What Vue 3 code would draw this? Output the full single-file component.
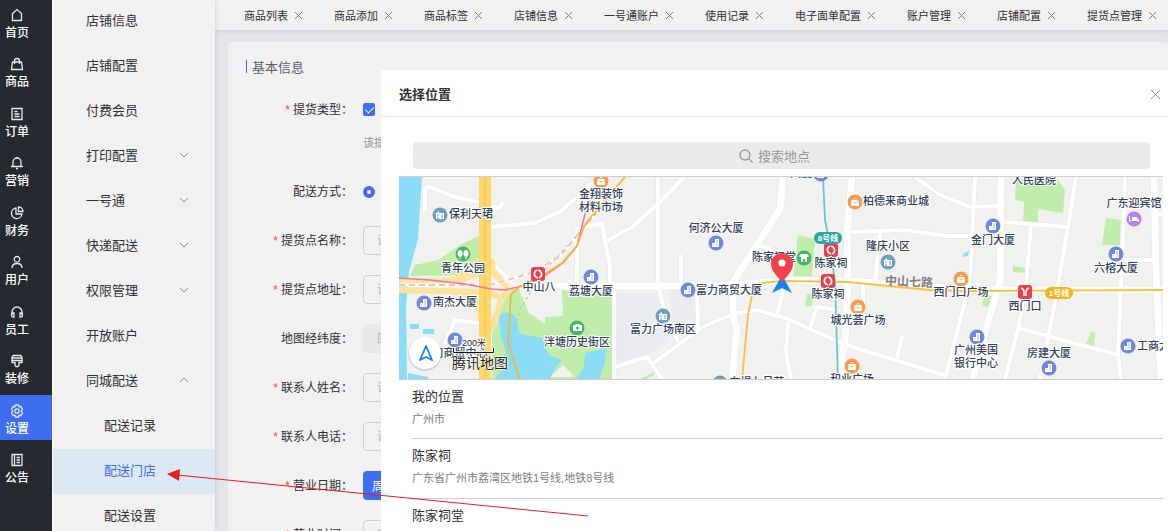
<script setup>
import { ref } from 'vue'

const mainNav = [
  { label: '首页', icon: ['M2.5 5.5 7 1.5l4.5 4v7h-9z'] },
  { label: '商品', icon: ['M2.5 5h9l1 7.5h-11z', 'M4.5 7V4a2.5 2.5 0 0 1 5 0v3'] },
  { label: '订单', icon: ['M2 1.5h10v11H2z', 'M4.5 4.5h3M4.5 7h5M4.5 9.5h5'] },
  { label: '营销', icon: ['M3 10.5V6a4 4 0 0 1 8 0v4.5', 'M1 10.5h12M6 12.5h2M7 1v1'] },
  { label: '财务', icon: ['M6 2a5.3 5.3 0 1 0 6 6H6z', 'M8.5 1v4.5H13A4.5 4.5 0 0 0 8.5 1z'] },
  { label: '用户', icon: ['M7 1.5a2.8 2.8 0 1 0 .01 0z', 'M2 13c0-3 2-4.5 5-4.5s5 1.5 5 4.5'] },
  { label: '员工', icon: ['M2 10V7a5 5 0 0 1 10 0v3', 'M2 8h2v4H3a1.5 1.5 0 0 1-1.5-1.5zM12 8h-2v4h1a1.5 1.5 0 0 0 1.5-1.5z'] },
  { label: '装修', icon: ['M3.5 1.5h7l1.5 1.5v3.5H2V3z', 'M2 4h10M2 6.5v2h3v3l1 1h2l1-1v-3h3v-2'] },
  { label: '设置', icon: ['M5.5 1h3l.6 1.7 1.8-.2 1.5 2.5L11.3 7l1.1 2-1.5 2.5-1.8-.2-.6 1.7h-3l-.6-1.7-1.8.2L1.600 9l1.100-2-1.100-2 1.500-2.500 1.800.2z', 'M7 4.8a2.2 2.2 0 1 0 .01 0z'] },
  { label: '公告', icon: ['M2 1.5h10v11H2zM4.5 1.5v11', 'M6.5 4.5H10M6.5 7H10M6.5 9.5H10'] },
]
const activeNav = ref('设置')

const subNav = [
  { label: '店铺信息' },
  { label: '店铺配置' },
  { label: '付费会员' },
  { label: '打印配置', arrow: 'down' },
  { label: '一号通', arrow: 'down' },
  { label: '快递配送', arrow: 'down' },
  { label: '权限管理', arrow: 'down' },
  { label: '开放账户' },
  { label: '同城配送', arrow: 'up' },
  { label: '配送记录', child: true },
  { label: '配送门店', child: true },
  { label: '配送设置', child: true },
]
const activeSub = ref('配送门店')

const tabs = ['商品列表', '商品添加', '商品标签', '店铺信息', '一号通账户', '使用记录', '电子面单配置', '账户管理', '店铺配置', '提货点管理']

const fields = [
  { id: 'name', label: '提货点名称', required: true },
  { id: 'address', label: '提货点地址', required: true },
  { id: 'geo', label: '地图经纬度', disabled: true },
  { id: 'contact', label: '联系人姓名', required: true },
  { id: 'phone', label: '联系人电话', required: true },
]

const places = [
  { name: '我的位置', address: '广州市' },
  { name: '陈家祠', address: '广东省广州市荔湾区地铁1号线,地铁8号线' },
  { name: '陈家祠堂', address: '广东省广州市荔湾区中山七路恩龙里34号' },
]

const roads = [
  'M425 210V190q0-3 5-3l25 10 24 5', 'M491 207l9 1 3-6',
  'M491 227l44-4 25-11 40-35', 'M493 264l22 21 15 2',
  'M577 284V229l25-6 3 19 5 23v20', 'M605 242l27-15 26-23 26-27',
  'M658 177v108l5 20 15 37', 'M681 255v30', 'M697 290l1 39', 'M614 286v93',
  'M615 367l32-10 5 7 51-37 30-13 24-4 31 9 55 25 104 32', 'M652 364l10 15',
  'M757 245l30 9 11 2', 'M783 290l-6 27', 'M788 322l-2 30 5 27',
  'M848 232l57-2 42 6h23', 'M880 232l-5 50',
  'M915 177l25 18 30 12 30-1', 'M975 177l-5 105-15 58-10 39',
  'M810 328l7-21 20 3', 'M897 358l5-22', 'M863 285v23',
  'M1005 222l63 5', 'M1031 225l-5 60-8 44-13 50', 'M1076 177l-8 50-13 75-15 77',
  'M1018 328l100 27', 'M1125 177l-4 108-3 70 3 24', 'M1119 260h38',
  'M444 345l11-25 22 3 6-1', 'M1163 214h-6',
]
const wideRoads = [
  'M520 286h194l30-2 40-4 64 1 60 4 70 5h185',
  'M783 177l-3 32-23 36-24 37v33l4 14-5 50',
  'M852 177l-5 55 1 50-3 58-6 39',
  'M1001 177l-1 105-12 40-15 57',
  'M1154 177l2 95 5 107',
]

const greens = [
  'M415 265l23-5 24-16 21-10v41l-73 1z',
  'M492 318l20-29h43l20 3h38v87h-121z',
  'M798 235l17 4-3 39h-19z', 'M807 294h6l-1 12h-7z',
  'M1016 179l42 1 7 10-2 23-25-4v13h-15l1-20-9-2z',
  'M1106 218l15 2-1 25h-18z', 'M1013 266l13 2-1 5-12-1z',
  'M985 295l7 1-4 11-6-2z', 'M1091 332h4l-1 15h-9z', 'M640 379l14-7v3l-8 4z',
]
const waters = [
  'M399 177h23l-4 62-9 33-3 33 1 74h-8z',
  'M498 315q12-6 18 2l4 17 22 4 7 17 13 5q-8 8-12 19h-55l14-18-8-24z',
  'M576 379l8-12 1-14 22-5-3 18-5 13z',
  'M410 324h9v5h-9zM423 329h11v5h-11zM408 373l20 4v2h-20z',
  'M963 254l6-3-1 5-5 1z',
]

// kinds: office, home, shop, park, hotel
const pois = [
  { x: 440, y: 215, kind: 'home' }, { x: 463, y: 254, kind: 'park' },
  { x: 424, y: 303, kind: 'office' }, { x: 591, y: 277, kind: 'office' },
  { x: 601, y: 181, kind: 'shop' }, { x: 455, y: 340, kind: 'office' },
  { x: 577, y: 328, kind: 'park' }, { x: 716, y: 243, kind: 'office' },
  { x: 688, y: 290, kind: 'office' }, { x: 663, y: 316, kind: 'home' },
  { x: 804, y: 258, kind: 'park' }, { x: 855, y: 202, kind: 'shop' },
  { x: 888, y: 262, kind: 'home' }, { x: 961, y: 279, kind: 'shop' },
  { x: 858, y: 307, kind: 'shop' }, { x: 852, y: 366, kind: 'shop' },
  { x: 821, y: 174, kind: 'office' }, { x: 720, y: 383, kind: 'home' },
  { x: 993, y: 226, kind: 'office' }, { x: 1134, y: 219, kind: 'hotel' },
  { x: 1116, y: 254, kind: 'office' }, { x: 977, y: 337, kind: 'office' },
  { x: 1049, y: 368, kind: 'office' }, { x: 1128, y: 346, kind: 'office' },
]
const stations = [{ x: 538, y: 274 }, { x: 831, y: 250 }, { x: 828, y: 281 }]

const mapLabels = [
  ['保利天珺', 471, 214], ['青年公园', 463, 268], ['南杰大厦', 455, 302], ['中山八', 539, 287],
  ['荔塘大厦', 591, 291], ['金翔装饰', 601, 194], ['材料市场', 601, 207], ['司商贸中心', 460, 353],
  ['泮塘历史街区', 577, 342], ['何济公大厦', 716, 228], ['富力商贸大厦', 729, 290],
  ['富力广场南区', 663, 329], ['陈家祠堂', 774, 257], ['陈家祠', 831, 263], ['陈家祠', 828, 294],
  ['柏德来商业城', 896, 201], ['隆庆小区', 888, 246], ['西门口广场', 961, 292],
  ['城光荟广场', 858, 320], ['和业广场', 852, 379], ['大厦', 801, 173], ['东堤七号苑', 757, 382],
  ['人民医院', 1034, 180], ['金门大厦', 993, 240], ['广东迎宾馆', 1134, 203], ['六榕大厦', 1116, 268],
  ['西门口', 1025, 306], ['广州美国', 976, 350], ['银行中心', 976, 363], ['房建大厦', 1049, 353],
  ['工商大厦', 1159, 346],
]
</script>

<template>
  <div class="shell">
    <nav class="main-nav">
      <a v-for="item in mainNav" :key="item.label" href="#" :class="{ active: item.label === activeNav }" @click.prevent="activeNav = item.label">
        <svg width="14" height="14" viewBox="0 0 14 14" fill="none" stroke="currentColor" stroke-width="1.3">
          <path v-for="d in item.icon" :key="d" :d="d" />
        </svg>
        <span>{{ item.label }}</span>
      </a>
    </nav>

    <nav class="sub-nav">
      <a v-for="item in subNav" :key="item.label" href="#" :class="{ child: item.child, active: item.label === activeSub }" @click.prevent="activeSub = item.label">
        <span>{{ item.label }}</span>
        <svg v-if="item.arrow" :class="item.arrow" width="10" height="6" viewBox="0 0 10 6" fill="none" stroke="#8a8d92">
          <path d="M1 1l4 4 4-4" />
        </svg>
      </a>
    </nav>

    <div class="workspace">
      <div class="tabs">
        <div v-for="tab in tabs" :key="tab" class="tab">
          <a href="#">{{ tab }}</a>
          <button type="button" :aria-label="'关闭' + tab">
            <svg width="9" height="9" viewBox="0 0 9 9" stroke="#7d7f83" fill="none"><path d="M1 1l7 7M8 1l-7 7" /></svg>
          </button>
        </div>
      </div>

      <form class="card" @submit.prevent>
        <h2>基本信息</h2>
        <div class="row">
          <label class="required" for="type">提货类型：</label>
          <input id="type" class="check" type="checkbox" checked />
        </div>
        <p class="hint">该提货点支持的提货类型</p>
        <div class="row">
          <label for="way">配送方式：</label>
          <input id="way" class="radio" type="radio" checked />
        </div>
        <div v-for="f in fields" :key="f.id" class="row">
          <label :class="{ required: f.required }" :for="f.id">{{ f.label }}：</label>
          <input :id="f.id" class="text" type="text" :disabled="f.disabled" :placeholder="f.disabled ? '回填经纬度' : '请输入' + f.label" />
        </div>
        <div class="row">
          <span class="label required">营业日期：</span>
          <button class="day" type="button">周一</button>
        </div>
        <div class="row">
          <label class="required" for="time">营业时间：</label>
          <div class="time">
            <svg width="12" height="12" viewBox="0 0 12 12" fill="none" stroke="#b0b3b9"><circle cx="6" cy="6" r="5" /><path d="M6 3v3h3" /></svg>
            <input id="time" type="text" placeholder="开始时间" />
          </div>
        </div>
      </form>
    </div>

    <section class="dialog" role="dialog" aria-labelledby="dialog-title">
      <header>
        <h1 id="dialog-title">选择位置</h1>
        <button type="button" aria-label="关闭">
          <svg width="11" height="11" viewBox="0 0 11 11" stroke="#909399" fill="none"><path d="M1 1l9 9M10 1l-9 9" /></svg>
        </button>
      </header>
      <div class="picker">
        <button class="search" type="button">
          <svg width="14" height="14" viewBox="0 0 14 14" fill="none" stroke="#999" stroke-width="1.3"><circle cx="6" cy="6" r="5" /><path d="M10 10l3.5 3.5" /></svg>
          <span>搜索地点</span>
        </button>

        <svg class="map" viewBox="399 177 764 202" preserveAspectRatio="xMidYMid slice">
          <defs>
            <g id="poi-office"><circle r="7.5" fill="#6f88dc" /><path d="M-4 4V0h3v-4h4v8z" fill="#fff" /><path d="M1-3v6M-3 2h1" stroke="#a9b8ec" /></g>
            <g id="poi-home"><circle r="7.5" fill="#6d9fc0" /><path d="M-5-1l4-3v2h5v6h-8v-5z" fill="#fff" /><path d="M1 0h2M1 2h2M-3 0h2M-2 2v2" stroke="#6d9fc0" /></g>
            <g id="poi-shop"><circle r="7.5" fill="#fb9b4d" /><path d="M-3.5-2h7l.5 6h-8z" fill="#fff" /><path d="M-1.5-2.5q1.5-3 3 0" stroke="#fff" fill="none" /><path d="M-1.5 0q1.5 2 3 0" stroke="#fb9b4d" fill="none" /></g>
            <g id="poi-hotel"><circle r="7.5" fill="#b681ea" /><path d="M-4.5-3v6M4.5 0v3M-4.5 1.5h9" stroke="#fff" fill="none" /><path d="M-2-2h5l1 3h-6z" fill="#fff" /></g>
            <g id="poi-park"><circle r="7.5" fill="#43b862" /></g>
            <g id="station"><rect x="-7" y="-7" width="14" height="14" rx="3" fill="#e8404c" /><path d="M-1-4a4 4 0 0 0-1 7l2 1M1 4a4 4 0 0 0 1-7L0-4" fill="none" stroke="#fff" stroke-width="1.8" /></g>
          </defs>

          <rect x="399" y="177" width="764" height="203" fill="#f1f1f0" />
          <path d="M617 292h44l8 50-22 15-32 10zM668 290h30v36l-22 12z" fill="#ebecef" />
          <path v-for="d in greens" :key="d" :d="d" fill="#c0edaa" />
          <path v-for="d in waters" :key="d" :d="d" fill="#8bdcf6" />
          <path d="M519 290h43l1 26-18 1v7l-16-11zM550 377l13-12 12 12z" fill="#f1f1f0" />

          <g fill="none" stroke-linejoin="round">
            <g stroke="#e3e5e9">
              <path v-for="d in roads" :key="d" :d="d" stroke-width="5" />
              <path v-for="d in wideRoads" :key="d" :d="d" stroke-width="8" />
            </g>
            <g stroke="#fff">
              <path v-for="d in roads" :key="d" :d="d" stroke-width="4" />
              <path v-for="d in wideRoads" :key="d" :d="d" stroke-width="7" />
            </g>
            <path d="M399 281h62l20-9 8-26" stroke="#fde3a0" stroke-width="5" />
            <path d="M399 290l80 2 12 1 10 5q8-4 5-12l-12-13-3-14M455 292q24 0 26 28M491 330q8-15 10-35M440 282q26-2 40-22" stroke="#fce29a" stroke-width="6" />
            <path d="M399 285h55l40-1 40-12 26-16 40-48 10-12" stroke="#fff" stroke-width="3" />
            <path d="M399 285h55l40-1 40-12 26-16 40-48 10-12" stroke="#eac7a8" stroke-width="2" stroke-dasharray="6 4" />
            <path d="M498 372l12-27 10-35 20-34 20-22 36-40" stroke="#b5b6bb" stroke-dasharray="3 3" />
            <path d="M485 177v203" stroke="#fdd768" stroke-width="12" />
            <path d="M485 177v203" stroke="#f3c14c" />
            <path d="M399 278l31 2 35 4 26 5 14 1 18-4 20-9 20-14 14-17 10-40 16-29" stroke="#f37597" stroke-width="1.5" />
            <path d="M520 380l-12-37 3-48 9-9 20-9 22-14 15-17 7-20 14-18 27-31" stroke="#f8b733" stroke-width="1.8" />
            <path d="M742 380l6-65 4-20q2-10 10-12l20-2 65 1 83 8 38 1 195-1" stroke="#f9c23b" stroke-width="1.8" />
            <path d="M823 177l2 43 4 20 6 42 3 98" stroke="#68c7cf" stroke-width="1.8" />
          </g>

          <use v-for="p in pois" :key="p.x + '-' + p.y" :href="'#poi-' + p.kind" :x="p.x" :y="p.y" />
          <path d="M460 250a2.5 3.5 0 0 1 .01 7zM460 250a2.5 3.5 0 0 0 .01 7zM466 250a2.5 3.5 0 0 1 .01 7zM466 250a2.5 3.5 0 0 0 .01 7zM459.5 256h1v3h-1zM465.5 256h1v3h-1z" fill="#fff" />
          <path d="M573 325h2l1-1h3l1 1h2v6h-9z" fill="#fff" /><circle cx="577.5" cy="328" r="1.5" fill="#43b862" />
          <path d="M799 256l2-2h6l2 2-1 1h-8zM801 257h6v5h-2v-3h-2v3h-2z" fill="#fff" />

          <use v-for="s in stations" :key="s.x" href="#station" :x="s.x" :y="s.y" />
          <rect x="1018" y="285" width="14" height="14" rx="3" fill="#e8404c" />
          <path d="M1021 288q3 1 3 4v4M1029 288q-3 1-3 4v4" fill="none" stroke="#fff" stroke-width="1.5" />
          <rect x="814" y="232" width="28" height="12" rx="6" fill="#2ba8a3" />
          <rect x="1045" y="287" width="28" height="12" rx="6" fill="#f5b417" />
          <g class="line-name"><text x="828" y="238">8号线</text><text x="1059" y="293">1号线</text></g>

          <text class="street" x="909" y="282" transform="rotate(3 909 282)">中山七路</text>
          <g class="place-name">
            <text v-for="([name, x, y], i) in mapLabels" :key="i" :x="x" :y="y">{{ name }}</text>
          </g>

          <path d="M782 275l10 18-10-5-10 5z" fill="#1681f8" />
          <path d="M782 283c-2-5-11-11-11-19a11 11 0 0 1 22 0c0 8-9 14-11 19z" fill="#f2414a" />
          <circle cx="782" cy="263" r="3.5" fill="#fff" />

          <circle cx="425" cy="354" r="17" fill="#8d949c" opacity=".3" />
          <circle cx="425" cy="353" r="16" fill="#fff" />
          <path d="M426 346l-6 14 6-3 6 3z" fill="#fff" stroke="#1681f8" stroke-width="1.8" stroke-linejoin="round" />
          <path d="M453.5 348v4.5h40V348" fill="none" stroke="#fff" stroke-width="3" opacity=".7" />
          <path d="M453.5 348v4.5h40V348" fill="none" stroke="#111" />
          <text class="scale" x="474" y="343">200米</text>
          <text class="brand" x="480" y="363">腾讯地图</text>
        </svg>

        <ul>
          <li v-for="place in places" :key="place.name">
            <strong>{{ place.name }}</strong>
            <span>{{ place.address }}</span>
          </li>
        </ul>
      </div>
    </section>

    <svg class="pointer" width="422" height="50" viewBox="0 0 422 50">
      <path d="M10 6l411 41" stroke="#ea1c24" fill="none" />
      <path d="M0 5l13-5-1 12z" fill="#ea1c24" />
    </svg>
  </div>
</template>

<style>
body {
  margin: 0;
}
</style>

<style scoped>
* {
  box-sizing: border-box;
}
.shell {
  position: relative;
  display: flex;
  height: 100vh;
  overflow: hidden;
  background: #e3e5ea;
  color: #303133;
  font-family: "Liberation Sans", "Noto Sans CJK SC", sans-serif;
  font-size: 13px;
}
a {
  color: inherit;
  text-decoration: none;
}
button {
  display: flex;
  align-items: center;
  padding: 0;
  border: 0;
  background: none;
  font: inherit;
  cursor: pointer;
}
h1,
h2,
p,
ul {
  margin: 0;
  padding: 0;
}

.main-nav {
  display: flex;
  flex: none;
  flex-direction: column;
  justify-content: space-between;
  width: 52px;
  margin-top: -1px;
  padding-bottom: 42px;
  background: #252a31;
}
.main-nav a {
  display: flex;
  flex: none;
  flex-direction: column;
  gap: 2px;
  height: 45px;
  padding: 9px 0 0 5px;
  color: #fff;
  font-size: 12px;
  font-weight: 500;
  line-height: 18px;
}
.main-nav svg {
  flex: none;
  margin-left: 5px;
  color: #e6e8ea;
}
.main-nav .active {
  background: #3e6df0;
}

.sub-nav {
  z-index: 1;
  flex: none;
  width: 163px;
  margin-top: -1px;
  background: #f1f1f1;
  border-left: 1px solid #fafafa;
  box-shadow: 1px 0 4px rgba(0, 21, 41, 0.12);
}
.sub-nav a {
  display: flex;
  align-items: center;
  justify-content: space-between;
  height: 45px;
  padding: 0 26px 4px 33px;
}
.sub-nav .child {
  padding-left: 51px;
}
.sub-nav .active {
  background: #dce8f2;
  color: #3e6df0;
}
.sub-nav .up {
  transform: rotate(180deg);
}

.workspace {
  flex: 1;
  min-width: 0;
}
.tabs {
  display: flex;
  gap: 31px;
  height: 30px;
  padding-left: 29px;
  overflow: hidden;
  background: #f1f1f1;
  box-shadow: 0 1px 4px rgba(0, 21, 41, 0.1);
  font-size: 11px;
}
.tab {
  display: flex;
  flex: none;
  align-items: center;
  gap: 6px;
}

.card {
  display: flex;
  flex-direction: column;
  margin: 12px 0 0 13px;
  padding: 15px 18px;
  border-radius: 4px;
  background: #f1f1f1;
  font-size: 12px;
}
.card h2 {
  display: flex;
  align-items: center;
  gap: 5px;
  height: 18px;
  margin-bottom: 20px;
  color: #5c5f66;
  font-size: 13px;
  font-weight: 400;
}
.card h2::before {
  width: 1px;
  height: 13px;
  background: #3e6df0;
  content: "";
}
.row {
  display: flex;
  align-items: center;
  height: 29px;
  margin-bottom: 20px;
}
.row label,
.label {
  flex: none;
  width: 107px;
  margin-right: 10px;
  padding-bottom: 2px;
  text-align: right;
}
.required::before {
  margin-right: 3px;
  color: #f0484d;
  content: "*";
}
.hint {
  margin: -11px 0 24px 117px;
  color: #8f9196;
  font-size: 11px;
  line-height: 20px;
}
.row input {
  margin: 0;
}
.check {
  width: 12px;
  height: 13px;
  border-radius: 2px;
  appearance: none;
  background: #3e6df0;
}
.check::after {
  display: block;
  width: 4px;
  height: 7px;
  margin: 2px auto;
  border: solid #fff;
  border-width: 0 1px 1px 0;
  transform: rotate(45deg);
  content: "";
}
.radio {
  width: 12px;
  height: 12px;
  border: 4px solid #3e6df0;
  border-radius: 50%;
  appearance: none;
  background: #fff;
}
.text,
.time {
  flex: 1;
  height: 29px;
  padding: 0 13px;
  border: 1px solid #cdcfd8;
  border-radius: 4px;
  background: transparent;
  font: inherit;
}
.text:disabled {
  border-color: #e4e5e8;
  background: #e7e8ea;
}
.text::placeholder {
  color: #b0b3b9;
}
.day {
  height: 29px;
  padding: 0 9px;
  border-radius: 4px;
  background: #3e6df0;
  color: #fff;
}
.time {
  display: flex;
  align-items: center;
  gap: 6px;
  padding: 0 10px;
}
.time input {
  border: 0;
  background: none;
}

.dialog {
  position: absolute;
  z-index: 2;
  top: 70px;
  right: 0;
  bottom: 0;
  left: 381px;
  overflow: hidden;
  border-top-left-radius: 4px;
  background: #fff;
}
.dialog header {
  display: flex;
  align-items: center;
  justify-content: space-between;
  height: 47px;
  padding: 2px 7px 0 18px;
  border-bottom: 1px solid #e8e8ea;
}
.dialog h1 {
  padding-bottom: 2px;
  font-size: 13px;
  font-weight: 700;
}
.picker {
  padding: 25px 5px 0 18px;
}
.search {
  display: flex;
  justify-content: center;
  gap: 5px;
  width: calc(100% - 27px);
  height: 27px;
  margin: 0 0 7px 14px;
  padding-right: 14px;
  border-radius: 4px;
  background: #ebebeb;
  color: #999;
}
.map {
  display: block;
  width: 100%;
  height: 204px;
  border: solid #cfcfcf;
  border-width: 1px 0;
}
.map text {
  dominant-baseline: central;
  text-anchor: middle;
}
.place-name {
  fill: #33435c;
  stroke: #fff;
  stroke-width: 2px;
  font-size: 11px;
  font-weight: 500;
  paint-order: stroke;
}
.street {
  fill: #7f8084;
  font-size: 12px;
  font-weight: 700;
}
.line-name {
  fill: #fff;
  font-size: 8px;
  font-weight: 700;
}
.scale {
  fill: #222;
  stroke: #fff;
  stroke-width: 2px;
  font-size: 9px;
  paint-order: stroke;
}
.brand {
  fill: #222;
  stroke: #fff;
  stroke-width: 1px;
  font-size: 14px;
  paint-order: stroke;
}
.picker ul {
  margin-left: 13px;
  list-style: none;
}
.picker li {
  display: flex;
  flex-direction: column;
  height: 60px;
  padding-top: 7px;
  border-bottom: 1px solid #cfcfcf;
}
.picker li:first-child {
  height: 59px;
}
.picker strong {
  font-weight: 400;
  line-height: 20px;
}
.picker li span {
  color: #7d7d7d;
  font-size: 11px;
  line-height: 24px;
}

.pointer {
  position: absolute;
  z-index: 3;
  top: 469px;
  left: 167px;
  pointer-events: none;
}
</style>
